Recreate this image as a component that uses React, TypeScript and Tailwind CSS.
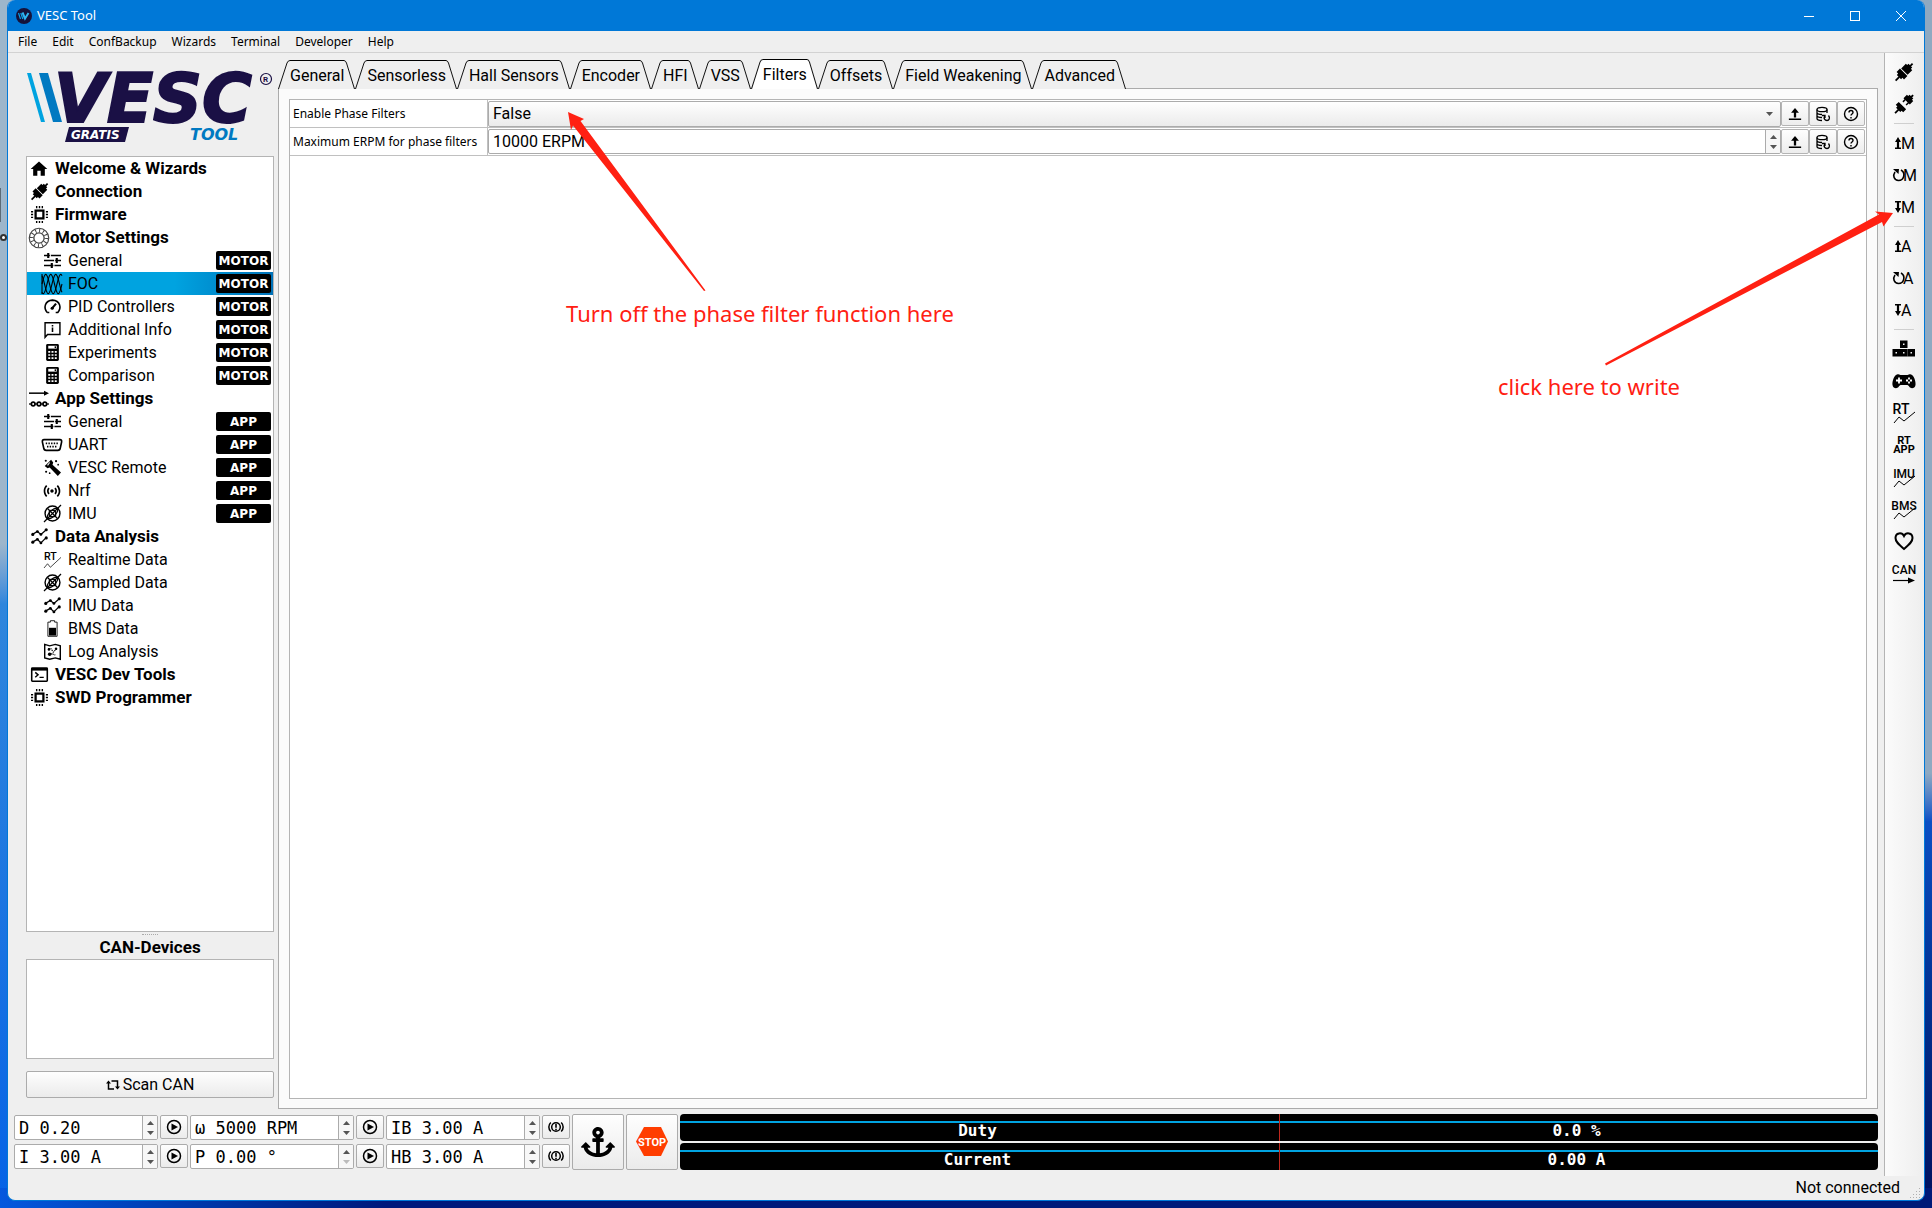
import type { ReactNode } from "react";
import { FaAnchor } from "react-icons/fa";
import { MdHome, MdSensors } from "react-icons/md";

type IconProps = { className?: string };

function Svg({ className = "size-5", box = 24, children }: { className?: string; box?: number; children: ReactNode }) {
  return (
    <svg className={`overflow-visible ${className}`} viewBox={`0 0 ${box} ${box}`} fill="none" stroke="currentColor" aria-hidden="true">
      {children}
    </svg>
  );
}

function PlugIcon({ className }: IconProps) {
  return (
    <Svg className={className}>
      <g transform="rotate(45 12 12)" fill="currentColor" stroke="none">
        <rect x="11" y="-4" width="2.400" height="6" />
        <path d="M8.500 0h7v2.500H18v8.800H6V2.500h2.500z" />
        <path d="M5 12.600h14v6.400h-3v2.500H8V19H5z" />
        <rect x="11" y="21" width="2.400" height="7" />
      </g>
    </Svg>
  );
}

function UnplugIcon({ className }: IconProps) {
  return (
    <Svg className={className}>
      <g transform="rotate(45 12 12)" fill="currentColor" stroke="none">
        <rect x="11" y="-5" width="2.400" height="5" />
        <path d="M8.500-2h7V.5H18V7h-2v4h-2V7h-4v4H8V7H6V.5h2.500z" />
        <path d="M5 15h14v5.500h-3V23H8v-2.500H5z" />
        <rect x="11" y="22" width="2.400" height="7" />
      </g>
    </Svg>
  );
}

function ChipIcon({ className }: IconProps) {
  return (
    <Svg className={className}>
      <rect x="6.500" y="6.500" width="11" height="11" strokeWidth="3.200" />
      <path d="M8 0v3M12 0v3M16 0v3M8 21v3M12 21v3M16 21v3M0 8h3M0 12h3M0 16h3M21 8h3M21 12h3M21 16h3" strokeWidth="2" />
    </Svg>
  );
}

function MotorIcon({ className }: IconProps) {
  return (
    <Svg className={className}>
      <g stroke="#444">
        <circle cx="12" cy="12" r="11.700" strokeWidth="1.400" />
        <circle cx="12" cy="12" r="6.200" strokeWidth="1.600" />
        <circle cx="12" cy="12" r="9" strokeWidth="4.500" strokeDasharray="1.200 3.500" />
      </g>
    </Svg>
  );
}

function TuneIcon({ className }: IconProps) {
  return (
    <Svg className={className}>
      <path d="M0 5h24M0 12h24M0 19h24" strokeWidth="2.200" />
      <path d="M6 1.500v7M18 8.500v7M11 15.500v7" strokeWidth="3" />
      <path d="M9 3v4M15 10v4M14 17v4" stroke="#fff" strokeWidth="1.400" />
    </Svg>
  );
}

/* three phases, 120 degrees apart */
function wave(phase: number) {
  const pts: string[] = [];
  for (let x = 0; x <= 24; x += 0.5) {
    const y = 12 - 11.5 * Math.sin((x / 18) * 2 * Math.PI + phase);
    pts.push(`${x},${y.toFixed(2)}`);
  }
  return pts.join(" ");
}

function WavesIcon({ className }: IconProps) {
  return (
    <Svg className={className}>
      <g strokeWidth="1.300">
        <path d="M0 0v24" />
        <polyline points={wave(0)} />
        <polyline points={wave((2 * Math.PI) / 3)} />
        <polyline points={wave((4 * Math.PI) / 3)} />
      </g>
    </Svg>
  );
}

function GaugeIcon({ className }: IconProps) {
  return (
    <Svg className={className}>
      <path d="M4.500 20.500C-1 14 1 3.500 12 3c11 .5 13 11 7.500 17.500h-3M4.500 20.500h3" strokeWidth="2.200" />
      <path d="M11 15l6-7" strokeWidth="3" />
      <circle cx="11.500" cy="14.500" r="2.200" fill="currentColor" stroke="none" />
    </Svg>
  );
}

function InfoIcon({ className }: IconProps) {
  return (
    <Svg className={className}>
      <path d="M1.500 23V2.500h21V19H5z" strokeWidth="2" />
      <path d="M12 5.500v2.300M12 9v6.500" strokeWidth="2.200" />
    </Svg>
  );
}

function CalculatorIcon({ className }: IconProps) {
  return (
    <Svg className={className}>
      <rect x="3" y="0" width="18" height="24" rx="2" fill="currentColor" stroke="none" />
      <path d="M6 4.500h12" stroke="#fff" strokeWidth="4" />
      <path d="M15 4.500h2" strokeWidth="2.500" />
      <path d="M6 11h12M6 15.500h12M6 20h12" stroke="#fff" strokeWidth="2.400" strokeDasharray="2.800 1.800" />
    </Svg>
  );
}

function AppIcon({ className }: IconProps) {
  return (
    <Svg className={className}>
      <path d="M0 5h19" strokeWidth="1.800" />
      <path d="M18 2l6 3-6 3z" fill="currentColor" stroke="none" />
      <path d="M0 18h24" strokeWidth="1.500" />
      <g fill="#fff" strokeWidth="2">
        <circle cx="5" cy="18" r="2.200" />
        <circle cx="12" cy="18" r="2.200" />
        <circle cx="19" cy="18" r="2.200" />
      </g>
    </Svg>
  );
}

function SerialIcon({ className }: IconProps) {
  return (
    <Svg className={className}>
      <path d="M2.500 5.500h19q2.500 0 2 3l-1.500 7q-.5 3-3 3H5q-2.500 0-3-3l-1.500-7q-.5-3 2-3z" strokeWidth="2" />
      <path d="M4.500 10h15M6 14h12" strokeWidth="2" strokeDasharray="1.700 1.500" />
    </Svg>
  );
}

function RemoteIcon({ className }: IconProps) {
  return (
    <Svg className={className}>
      <g fill="currentColor" stroke="none">
        <path d="M4 7l6-6 3 4-1 3 12 11-4.500 5L8 12l-3 1-4-3z" />
        <circle cx="2.500" cy="2.500" r="1.500" />
        <circle cx="17" cy="3" r="1.500" />
        <circle cx="20" cy="8" r="1.200" />
        <circle cx="3" cy="18" r="1.500" />
        <circle cx="8" cy="20" r="1.200" />
      </g>
      <path d="M8 5l-3 4" stroke="#fff" strokeWidth="1.500" />
    </Svg>
  );
}

function OrbitIcon({ className }: IconProps) {
  return (
    <Svg className={className}>
      <circle cx="12" cy="12" r="10.500" strokeWidth="2" />
      <rect x="7.500" y="7.500" width="9" height="9" rx="2" strokeWidth="1.800" />
      <path d="M0 24L24 0M5 5l14 14" strokeWidth="1.800" />
      <ellipse cx="12" cy="12" rx="9" ry="4" transform="rotate(-45 12 12)" strokeWidth="1.500" />
    </Svg>
  );
}

function SeriesIcon({ className }: IconProps) {
  return (
    <Svg className={className}>
      <path d="M2 9l7-4 5 4 8-7M2 20l7-4 5 5 7-7" strokeWidth="1.800" />
      <g fill="currentColor" stroke="none">
        <circle cx="2.500" cy="9" r="2.200" />
        <circle cx="9" cy="5" r="2" />
        <circle cx="14" cy="9" r="2" />
        <circle cx="21.500" cy="2.500" r="2.200" />
        <circle cx="2.500" cy="20" r="2.200" />
        <circle cx="9" cy="16" r="2" />
        <circle cx="14" cy="21" r="2" />
        <circle cx="21.500" cy="14" r="2.200" />
      </g>
    </Svg>
  );
}

function RtIcon({ className }: IconProps) {
  return (
    <Svg className={className}>
      <text x="0" y="13" fontSize="15" fontWeight="500" fontFamily="Roboto, sans-serif" fill="currentColor" stroke="none">RT</text>
      <path d="M0 24l5-6 4 5L24 9" strokeWidth="1" />
    </Svg>
  );
}

function BatteryIcon({ className }: IconProps) {
  return (
    <Svg className={className}>
      <path d="M9 3V1h6v2h3.500v20h-13V3z" strokeWidth="1.200" />
      <rect x="7" y="11" width="10" height="11" fill="currentColor" stroke="none" />
    </Svg>
  );
}

function MapIcon({ className }: IconProps) {
  return (
    <Svg className={className}>
      <path d="M1 2l7 2 8-2 7 2v19l-7-2-8 2-7-2z" strokeWidth="2" />
      <path d="M6 8h4l3 5 5-5M6 16l5-1 5 2" strokeWidth="1.500" strokeDasharray="2 1" />
      <g fill="currentColor" stroke="none">
        <circle cx="7" cy="9" r="1.800" />
        <circle cx="17" cy="8" r="1.800" />
        <circle cx="8" cy="16" r="2.500" />
      </g>
    </Svg>
  );
}

function ConsoleIcon({ className }: IconProps) {
  return (
    <Svg className={className}>
      <rect x="1" y="3" width="22" height="18.500" rx="1" strokeWidth="2.200" />
      <path d="M1 5h22" strokeWidth="3" />
      <path d="M6 9l4 3.500L6 16M12 16h6" strokeWidth="2" />
    </Svg>
  );
}

function UploadIcon({ className }: IconProps) {
  return (
    <Svg className={className} box={16}>
      <path d="M8 12V5" strokeWidth="2.600" />
      <path d="M8 1L3.500 6.500h9z" fill="currentColor" stroke="none" />
      <path d="M1 14h14" strokeWidth="1.800" />
    </Svg>
  );
}

function DbIcon({ className }: IconProps) {
  return (
    <Svg className={className} box={16}>
      <ellipse cx="7" cy="3.500" rx="5" ry="2.200" strokeWidth="1.300" />
      <path d="M2 3.500v9c0 1 2 2 5 2M12 3.500V7M2 6.500c0 1 2 2 5 2M2 9.500c0 1 2 2 5 2" strokeWidth="1.300" />
      <path d="M10 9.500c-2 3 0 5 2 5s3.500-2.500 1.500-5M10 12V9.500h-3" strokeWidth="1.300" />
    </Svg>
  );
}

function HelpIcon({ className }: IconProps) {
  return (
    <Svg className={className} box={16}>
      <circle cx="8" cy="8" r="6.500" strokeWidth="1.400" />
      <path d="M6 6.500c0-2.600 4-2.600 4 0C10 8 8 8 8 9.500M8 11v1.400" strokeWidth="1.400" />
    </Svg>
  );
}

function PlayIcon() {
  return (
    <Svg className="size-4" box={16}>
      <circle cx="8" cy="8" r="6.500" strokeWidth="1.500" />
      <path d="M5.500 4.500L12 8l-6.500 3.500z" fill="currentColor" stroke="none" />
    </Svg>
  );
}

function BrakeIcon() {
  return (
    <Svg className="size-4" box={16}>
      <circle cx="8" cy="8" r="4.300" strokeWidth="1.500" />
      <path d="M8 5v3.800M8 9.800v1.400" strokeWidth="1.600" />
      <path d="M2.800 3.500c-2.600 2.500-2.600 6.500 0 9M13.200 3.500c2.600 2.500 2.600 6.500 0 9" strokeWidth="1.500" />
    </Svg>
  );
}

/* toolbar glyph: arrow plus a letter for motor / app configuration */
function ConfIcon({ kind, letter }: { kind: "read" | "default" | "write"; letter: string }) {
  return (
    <Svg className="size-6">
      {kind === "read" && (
        <>
          <path d="M6 17V10" strokeWidth="2.200" />
          <path d="M6 6L3 11h6zM3 16.500h6v1.500H3z" fill="currentColor" stroke="none" />
        </>
      )}
      {kind === "write" && (
        <>
          <path d="M6 7v7" strokeWidth="2.200" />
          <path d="M6 18l-3-5h6zM3 6h6v1.500H3z" fill="currentColor" stroke="none" />
        </>
      )}
      {kind === "default" && (
        <>
          <path d="M9 7c5 3 3 10.500-2.500 10.500C2 17.500.5 12.500 3 9" strokeWidth="1.600" />
          <path d="M1 6h6l-.5 5z" fill="currentColor" stroke="none" />
        </>
      )}
      <text x={kind === "default" ? 11 : 9} y="18" fontSize="16" fontFamily="Roboto, sans-serif" fill="currentColor" stroke="none">
        {letter}
      </text>
    </Svg>
  );
}

function TraceIcon({ label }: { label: string }) {
  const short = label === "RT";
  return (
    <Svg className="size-6">
      <text x={short ? 9 : 12} y="13" textAnchor="middle" fontSize={short ? 14 : 12} fontWeight="500" fontFamily="Roboto, sans-serif" fill="currentColor" stroke="none">
        {label}
      </text>
      <path d="M2 22l5-6 5 4 11-9" strokeWidth="1" />
    </Svg>
  );
}

function RtAppIcon() {
  return (
    <Svg className="size-6">
      <g fontSize="11" fontWeight="700" fontFamily="Roboto, sans-serif" fill="currentColor" stroke="none" textAnchor="middle">
        <text x="12" y="11">RT</text>
        <text x="12" y="20">APP</text>
      </g>
    </Svg>
  );
}

function KeysIcon() {
  return (
    <Svg className="size-6">
      <g strokeWidth="3">
        <rect x="9.500" y="5" width="4.500" height="4.500" />
        <rect x="2" y="13.500" width="4.500" height="4.500" />
        <rect x="9.500" y="13.500" width="4.500" height="4.500" />
        <rect x="17" y="13.500" width="4.500" height="4.500" />
      </g>
    </Svg>
  );
}

function GamepadIcon() {
  return (
    <Svg className="size-6">
      <path d="M5 5.500c2-1 3 .5 4 .5h6c1 0 2-1.500 4-.5 3 1 5 7 4.500 10.500S19 20 17.500 18c-1-1.500-1.500-2-3-2h-5c-1.500 0-2 .5-3 2C5 20 1 19.500.5 16S2 6.500 5 5.500z" fill="currentColor" stroke="none" />
      <path d="M7 8.500v6M4 11.500h6" stroke="#fff" strokeWidth="1.800" />
      <path d="M17 8.500v6M14 11.500h6" stroke="#fff" strokeWidth="1.800" strokeDasharray="2 2" />
    </Svg>
  );
}

function HeartIcon() {
  return (
    <Svg className="size-6">
      <path d="M12 20C6 15 3.500 12.500 3.500 9c0-5.500 6.500-6 8.500-2 2-4 8.500-3.500 8.500 2 0 3.500-2.500 6-8.500 11z" strokeWidth="2" />
    </Svg>
  );
}

function CanIcon() {
  return (
    <Svg className="size-6">
      <text x="12" y="13" textAnchor="middle" fontSize="12" fontWeight="500" fontFamily="Roboto, sans-serif" fill="currentColor" stroke="none">CAN</text>
      <path d="M1 19.500h17" strokeWidth="1.200" />
      <path d="M16 16.500l7 3-7 3z" fill="currentColor" stroke="none" />
    </Svg>
  );
}

type Page = { name: string; icon: (p: IconProps) => ReactNode; root?: boolean; tag?: "MOTOR" | "APP"; selected?: boolean };

const PAGES: Page[] = [
  { name: "Welcome & Wizards", icon: MdHome, root: true },
  { name: "Connection", icon: PlugIcon, root: true },
  { name: "Firmware", icon: ChipIcon, root: true },
  { name: "Motor Settings", icon: MotorIcon, root: true },
  { name: "General", icon: TuneIcon, tag: "MOTOR" },
  { name: "FOC", icon: WavesIcon, tag: "MOTOR", selected: true },
  { name: "PID Controllers", icon: GaugeIcon, tag: "MOTOR" },
  { name: "Additional Info", icon: InfoIcon, tag: "MOTOR" },
  { name: "Experiments", icon: CalculatorIcon, tag: "MOTOR" },
  { name: "Comparison", icon: CalculatorIcon, tag: "MOTOR" },
  { name: "App Settings", icon: AppIcon, root: true },
  { name: "General", icon: TuneIcon, tag: "APP" },
  { name: "UART", icon: SerialIcon, tag: "APP" },
  { name: "VESC Remote", icon: RemoteIcon, tag: "APP" },
  { name: "Nrf", icon: MdSensors, tag: "APP" },
  { name: "IMU", icon: OrbitIcon, tag: "APP" },
  { name: "Data Analysis", icon: SeriesIcon, root: true },
  { name: "Realtime Data", icon: RtIcon },
  { name: "Sampled Data", icon: OrbitIcon },
  { name: "IMU Data", icon: SeriesIcon },
  { name: "BMS Data", icon: BatteryIcon },
  { name: "Log Analysis", icon: MapIcon },
  { name: "VESC Dev Tools", icon: ConsoleIcon, root: true },
  { name: "SWD Programmer", icon: ChipIcon, root: true },
];

/* icons drawn edge to edge in the tree */
const WIDE_ICONS: Page["icon"][] = [MdHome, MotorIcon, AppIcon, WavesIcon, SerialIcon, MdSensors];

const MENUS = ["File", "Edit", "ConfBackup", "Wizards", "Terminal", "Developer", "Help"];

const TABS = [
  "General", "Sensorless", "Hall Sensors", "Encoder", "HFI", "VSS",
  "Filters", "Offsets", "Field Weakening", "Advanced",
];

const TOOLS: ({ name: string; icon: ReactNode } | null)[] = [
  { name: "Connect", icon: <PlugIcon className="size-[18px]" /> },
  { name: "Disconnect", icon: <UnplugIcon className="size-[18px]" /> },
  null,
  { name: "Read motor configuration", icon: <ConfIcon kind="read" letter="M" /> },
  { name: "Read default motor configuration", icon: <ConfIcon kind="default" letter="M" /> },
  { name: "Write motor configuration", icon: <ConfIcon kind="write" letter="M" /> },
  null,
  { name: "Read app configuration", icon: <ConfIcon kind="read" letter="A" /> },
  { name: "Read default app configuration", icon: <ConfIcon kind="default" letter="A" /> },
  { name: "Write app configuration", icon: <ConfIcon kind="write" letter="A" /> },
  null,
  { name: "Keyboard control", icon: <KeysIcon /> },
  { name: "Gamepad control", icon: <GamepadIcon /> },
  { name: "Stream realtime data", icon: <TraceIcon label="RT" /> },
  { name: "Stream realtime app data", icon: <RtAppIcon /> },
  { name: "Stream IMU data", icon: <TraceIcon label="IMU" /> },
  { name: "Stream BMS data", icon: <TraceIcon label="BMS" /> },
  { name: "Send alive", icon: <HeartIcon /> },
  { name: "CAN forward", icon: <CanIcon /> },
];

function TitleBar() {
  return (
    <header className="flex h-[31px] shrink-0 items-center bg-[#0078d7] pl-2 text-white">
      <svg className="size-4" viewBox="0 0 16 16" aria-hidden="true">
        <circle cx="8" cy="8" r="8" fill="#15123a" />
        <path d="M2.500 5l2 6M4.800 5l2 6" stroke="#0aa0e8" strokeWidth="1.200" />
        <path d="M6.500 4.500l2.500 6L12.500 5" stroke="#2fb4f0" strokeWidth="2" fill="none" />
      </svg>
      <h1 className="ml-[5px] flex-1 font-['Noto_Sans'] text-[13px]">VESC Tool</h1>
      <button aria-label="Minimize" className="flex h-full w-[46px] items-center justify-center">
        <svg className="size-[10px]" viewBox="0 0 10 10" stroke="#fff"><path d="M0 5.500h10" /></svg>
      </button>
      <button aria-label="Maximize" className="flex h-full w-[46px] items-center justify-center">
        <svg className="size-[10px]" viewBox="0 0 10 10" stroke="#fff" fill="none"><rect x=".5" y=".5" width="9" height="9" /></svg>
      </button>
      <button aria-label="Close" className="flex h-full w-[46px] items-center justify-center">
        <svg className="size-[10px]" viewBox="0 0 10 10" stroke="#fff"><path d="M0 0l10 10M10 0L0 10" /></svg>
      </button>
    </header>
  );
}

function Logo() {
  return (
    <svg className="h-[103px] w-[248px] shrink-0" viewBox="0 0 248 103" role="img" aria-label="VESC Tool Gratis">
      <path d="M1 20h4l14 49h-4z" fill="#00a3e0" />
      <path d="M13 20h9l14 49h-9z" fill="#0079c1" />
      <g fontFamily="'DejaVu Sans', sans-serif" fontWeight="700" fontStyle="italic">
        <text x="28" y="69" fontSize="68" fill="#1a1045" stroke="#1a1045" strokeWidth="2">VESC</text>
        <path d="M43 74h60l-4 15H39z" fill="#1a1045" />
        <text x="45" y="86" fontSize="12" fill="#fff">GRATIS</text>
        <text x="164" y="87" fontSize="16" fill="#0079c1">TOOL</text>
      </g>
      <circle cx="240" cy="26" r="5.500" fill="none" stroke="#1a1045" strokeWidth="1.200" />
      <text x="237" y="29" fontSize="8" fontWeight="700" fontFamily="Roboto, sans-serif" fill="#1a1045">R</text>
    </svg>
  );
}

function PageRow({ page }: { page: Page }) {
  const Icon = page.icon;
  return (
    <li
      aria-current={page.selected ? "page" : undefined}
      className={
        "flex h-[23px] items-center gap-[6px] pr-[2px] " +
        (page.root ? "pl-[2px] text-[17px] font-bold " : "pl-[15px] text-base ") +
        (page.selected ? "bg-gradient-to-r from-[#00a3e0] from-60% to-[#0072b8]" : "")
      }
    >
      <span className="flex w-5 justify-center">
        <Icon className={WIDE_ICONS.includes(page.icon) ? "size-5" : "size-[17px]"} />
      </span>
      <span className="flex-1 whitespace-nowrap">{page.name}</span>
      {page.tag && (
        <span className="flex h-[19px] w-[55px] items-center justify-center rounded-xs bg-black font-['DejaVu_Sans'] text-xs font-bold text-white">
          {page.tag}
        </span>
      )}
    </li>
  );
}

function Sidebar() {
  return (
    <aside className="flex w-[252px] shrink-0 flex-col pr-1">
      <Logo />
      <ul className="min-h-0 flex-1 overflow-hidden border border-[#b4b4b4] bg-white">
        {PAGES.map((p, i) => <PageRow key={i} page={p} />)}
      </ul>
      <div className="flex h-[5px] items-center justify-center">
        <span className="w-4 border-t border-dotted border-[#aaa]" />
      </div>
      <h2 className="h-[22px] text-center text-[17px] leading-[21px] font-bold">CAN-Devices</h2>
      <div className="h-[100px] border border-[#b4b4b4] bg-white" />
      <button className="mt-3 mb-[11px] flex h-[27px] shrink-0 items-center justify-center gap-[3px] rounded-xs border border-[#ababab] bg-gradient-to-b from-[#fefefe] to-[#ebebeb] text-base">
        <svg className="h-3 w-[14px]" viewBox="0 0 14 12" fill="none" stroke="currentColor" strokeWidth="1.500" aria-hidden="true">
          <path d="M2.500 4v6H8M5.500 2h6v6" />
          <path d="M0 4.500l2.500-3 2.500 3zM9 7.500l2.500 3 2.500-3z" fill="currentColor" stroke="none" />
        </svg>
        Scan CAN
      </button>
    </aside>
  );
}

function Tab({ name }: { name: string }) {
  const on = name === "Filters";
  const fill = on ? "#ffffff" : "#efefef";
  return (
    <button role="tab" aria-selected={on} className={"flex " + (on ? "h-[30px]" : "h-[29px]")}>
      <svg className="h-full w-3" viewBox="0 0 12 29" preserveAspectRatio="none" aria-hidden="true">
        <path d="M.5 29L9 3Q10 .5 12 .5V29z" fill={fill} />
        <path d="M.5 29L9 3Q10 .5 12 .5" fill="none" stroke="#111" />
      </svg>
      <span className={"flex h-full items-center border-t border-black pt-[1px] text-base " + (on ? "bg-white" : "bg-[#efefef]")}>
        {name}
      </span>
      <svg className="h-full w-[11px]" viewBox="0 0 11 29" preserveAspectRatio="none" aria-hidden="true">
        <path d="M0 .5Q1.500 .5 2.500 3L10.500 29H0z" fill={fill} />
        <path d="M0 .5Q1.500 .5 2.500 3L10.500 29" fill="none" stroke="#111" />
      </svg>
    </button>
  );
}

function Stepper({ label, dimDown }: { label: string; dimDown?: boolean }) {
  return (
    <span className="flex w-[15px] shrink-0 flex-col border-l border-[#ababab] bg-[#f7f7f7]">
      <button aria-label={`Increase ${label}`} className="flex flex-1 items-end justify-center pb-[3px]">
        <svg className="h-1 w-[7px]" viewBox="0 0 7 4" fill="#555"><path d="M0 4l3.500-4L7 4z" /></svg>
      </button>
      <button aria-label={`Decrease ${label}`} className="flex flex-1 items-start justify-center pt-[3px]">
        <svg className="h-1 w-[7px]" viewBox="0 0 7 4" fill={dimDown ? "#bbb" : "#555"}><path d="M0 0l3.500 4L7 0z" /></svg>
      </button>
    </span>
  );
}

function ParamButtons({ name }: { name: string }) {
  const cls = "flex h-[25px] w-7 items-center justify-center rounded-xs border border-[#b4b4b4] bg-gradient-to-b from-[#fefefe] to-[#ededed]";
  return (
    <div className="flex">
      <button className={cls} aria-label={`Read ${name}`}><UploadIcon className="size-[14px]" /></button>
      <button className={cls} aria-label={`Read default ${name}`}><DbIcon className="size-4" /></button>
      <button className={cls} aria-label={`Help for ${name}`}><HelpIcon className="size-4" /></button>
    </div>
  );
}

function FocPanel() {
  return (
    <section className="flex min-w-0 flex-1 flex-col pr-[6px]">
      <div role="tablist" className="relative z-10 -mb-px flex h-9 shrink-0 items-end">
        {TABS.map((t) => <Tab key={t} name={t} />)}
      </div>
      <div className="flex flex-1 border border-[#ababab] bg-[#fbfbfb] px-[10px] pt-[10px] pb-[9px]">
        <div className="flex-1 border border-[#b4b4b4] bg-white">
          <div className="flex h-7 items-center border-b border-[#c0c0c0] pr-[1px]">
            <label htmlFor="phase-filters" className="flex h-full w-[198px] items-center border-r border-[#c0c0c0] pl-[3px] font-['Noto_Sans'] text-xs whitespace-nowrap">
              Enable Phase Filters
            </label>
            <div className="relative flex-1">
              <select id="phase-filters" className="block h-[26px] w-full appearance-none rounded-xs border border-[#ababab] bg-gradient-to-b from-[#fefefe] to-[#ebebeb] pl-1 text-base leading-6">
                <option>False</option>
                <option>True</option>
              </select>
              <svg className="pointer-events-none absolute top-[11px] right-2 h-1 w-[7px]" viewBox="0 0 7 4" fill="#555"><path d="M0 0l3.500 4L7 0z" /></svg>
            </div>
            <ParamButtons name="Enable Phase Filters" />
          </div>
          <div className="flex h-7 items-center border-b border-[#c0c0c0] pr-[1px]">
            <label htmlFor="max-erpm" className="flex h-full w-[198px] items-center border-r border-[#c0c0c0] pl-[3px] font-['Noto_Sans'] text-xs whitespace-nowrap">
              Maximum ERPM for phase filters
            </label>
            <div className="flex h-[25px] flex-1 overflow-hidden rounded-xs border border-[#ababab] bg-white">
              <input id="max-erpm" defaultValue="10000 ERPM" className="min-w-0 flex-1 pl-1 text-base leading-6" />
              <Stepper label="maximum ERPM" />
            </div>
            <ParamButtons name="Maximum ERPM" />
          </div>
        </div>
      </div>
    </section>
  );
}

type Spin = { label: string; value: string; dim?: boolean };

/* one column of the drive bar: two spin boxes, each with its run button */
function SpinColumn({ spins, width, brake }: { spins: Spin[]; width: string; brake?: boolean }) {
  return (
    <div className="flex flex-col gap-1">
      {spins.map((s) => (
        <div key={s.label} className="flex gap-[2px]">
          <div className={`flex h-[25px] overflow-hidden rounded-xs border border-[#ababab] bg-white ${width}`}>
            <input aria-label={s.label} defaultValue={s.value} className="min-w-0 flex-1 pl-1 font-['DejaVu_Sans_Mono'] text-[17px] leading-6" />
            <Stepper label={s.label} dimDown={s.dim} />
          </div>
          <button aria-label={`Run ${s.label}`} className="flex h-6 w-7 items-center justify-center rounded-xs border border-[#ababab] bg-gradient-to-b from-[#fefefe] to-[#ebebeb]">
            {brake ? <BrakeIcon /> : <PlayIcon />}
          </button>
        </div>
      ))}
    </div>
  );
}

function Meter({ name, value }: { name: string; value: string }) {
  return (
    <div className="relative grid h-[27px] grid-cols-2 items-center overflow-hidden rounded-sm bg-black pt-[6px] text-center font-['DejaVu_Sans_Mono'] text-base leading-5 font-bold text-white">
      <span className="absolute inset-x-0 top-[7px] h-[2px] bg-[#00a3e0]" />
      <span className="relative pr-1">{name}</span>
      <span className="relative pr-1">{value}</span>
      <span className="absolute inset-y-0 left-1/2 w-px bg-[#c0281e]" />
    </div>
  );
}

function DriveBar() {
  const big = "flex h-14 w-[52px] shrink-0 items-center justify-center rounded-xs border border-[#ababab] bg-gradient-to-b from-[#fefefe] to-[#ebebeb]";
  return (
    <div className="flex items-center gap-[2px] px-[6px] pt-[5px] pb-[6px]">
      <SpinColumn width="w-36" spins={[{ label: "duty", value: "D 0.20" }, { label: "current", value: "I 3.00 A" }]} />
      <SpinColumn width="w-[164px]" spins={[{ label: "speed", value: "ω 5000 RPM" }, { label: "position", value: "P 0.00 °", dim: true }]} />
      <SpinColumn width="w-[154px]" brake spins={[{ label: "brake current", value: "IB 3.00 A" }, { label: "handbrake current", value: "HB 3.00 A" }]} />
      <button className={big} aria-label="Full brake"><FaAnchor className="size-[34px]" /></button>
      <button className={big} aria-label="Stop motor">
        <svg className="size-9" viewBox="0 0 36 36">
          <path d="M10 3h17l7 14.500L27 32H10L2 17.500z" fill="#ff3d00" />
          <text x="18" y="22" textAnchor="middle" fontSize="11" fontWeight="700" fontFamily="Roboto, sans-serif" fill="#fff">STOP</text>
        </svg>
      </button>
      <div className="flex flex-1 flex-col gap-[2px]">
        <Meter name="Duty" value="0.0 %" />
        <Meter name="Current" value="0.00 A" />
      </div>
    </div>
  );
}

function ToolBar() {
  return (
    <nav aria-label="Tools" className="flex w-10 shrink-0 flex-col items-center border-l border-[#b4b4b4] bg-gradient-to-r from-[#fbfbfb] to-[#eeeeee] pt-[3px] pr-[2px]">
      {TOOLS.map((t, i) =>
        t ? (
          <button key={i} aria-label={t.name} className="flex h-8 w-full items-center justify-center">{t.icon}</button>
        ) : (
          <span key={i} className="flex h-[7px] w-5 items-center"><span className="h-px w-full bg-[#cfcfcf]" /></span>
        ),
      )}
    </nav>
  );
}

/* red hints laid over the window */
function Hints() {
  const text = "absolute font-['Noto_Sans'] text-[22px] leading-[30px] whitespace-nowrap text-[#ff2012]";
  return (
    <div className="pointer-events-none absolute inset-0 z-20">
      <svg className="absolute top-[112px] left-[567px] h-[180px] w-[139px]" viewBox="0 0 139 180" fill="#ff2012">
        <path d="M1 0l16 7-3.500 2L138.500 178.500l-1.500 .5L6 13.500 4 18z" />
      </svg>
      <p className={`${text} top-[298px] left-[566px]`}>Turn off the phase filter function here</p>
      <svg className="absolute top-[210px] right-[38px] h-[156px] w-[290px]" viewBox="0 0 290 156" fill="#ff2012">
        <path d="M289 3l-9.500 13.500-1.500-4.500L2 155.500l-1-2L275 4.500l-4-3z" />
      </svg>
      <p className={`${text} top-[371px] right-[252px]`}>click here to write</p>
    </div>
  );
}

function ResizeGrip() {
  return (
    <svg className="absolute right-[2px] bottom-[2px] size-3" viewBox="0 0 12 12" stroke="#b0b0b0" strokeDasharray="1 2" aria-hidden="true">
      <path d="M9 2.500h3M6 5.500h6M3 8.500h9M0 11.500h12" />
    </svg>
  );
}

export default function App() {
  return (
    <div className="relative flex h-screen min-h-[900px] flex-col overflow-hidden bg-[#0038b0] px-[7px] pb-[7px] font-['Roboto'] text-black">
      {/* wallpaper strips */}
      <div className="absolute inset-y-0 left-0 w-5 bg-gradient-to-b from-[#9db6cb] from-45% via-[#2f86dc] via-50% to-[#0562e6]" />
      <div className="absolute inset-y-0 right-0 w-5 bg-gradient-to-b from-[#8fa9c1] from-64% via-[#0b4fc4] via-68% to-[#00105c]" />
      <div className="absolute inset-x-0 bottom-0 h-5 bg-gradient-to-r from-[#0558de] via-[#00187c] via-20% to-[#001a78]" />
      <div className="absolute top-[188px] left-0 h-[34px] w-px bg-[#5c6a76]" />
      <div className="absolute top-[234px] left-0 size-[7px] rounded-full border-2 border-[#333] bg-white" />
      <div className="relative flex min-h-0 flex-1 flex-col overflow-hidden rounded-lg border border-t-0 border-[#0078d7] bg-[#efefef]">
        <TitleBar />
        <nav className="flex h-[22px] shrink-0 items-center gap-[1px] border-b border-[#d2d2d2] pl-[3px]">
          {MENUS.map((m) => (
            <button key={m} className="px-[7px] font-['Noto_Sans'] text-xs">{m}</button>
          ))}
        </nav>
        <div className="flex min-h-0 flex-1">
          <main className="flex min-w-0 flex-1 flex-col">
            <div className="flex min-h-0 flex-1 pl-[18px]">
              <Sidebar />
              <FocPanel />
            </div>
            <DriveBar />
          </main>
          <ToolBar />
        </div>
        <footer className="relative flex h-6 shrink-0 items-center justify-end pr-6 text-base">
          Not connected
          <ResizeGrip />
        </footer>
      </div>
      <Hints />
    </div>
  );
}
